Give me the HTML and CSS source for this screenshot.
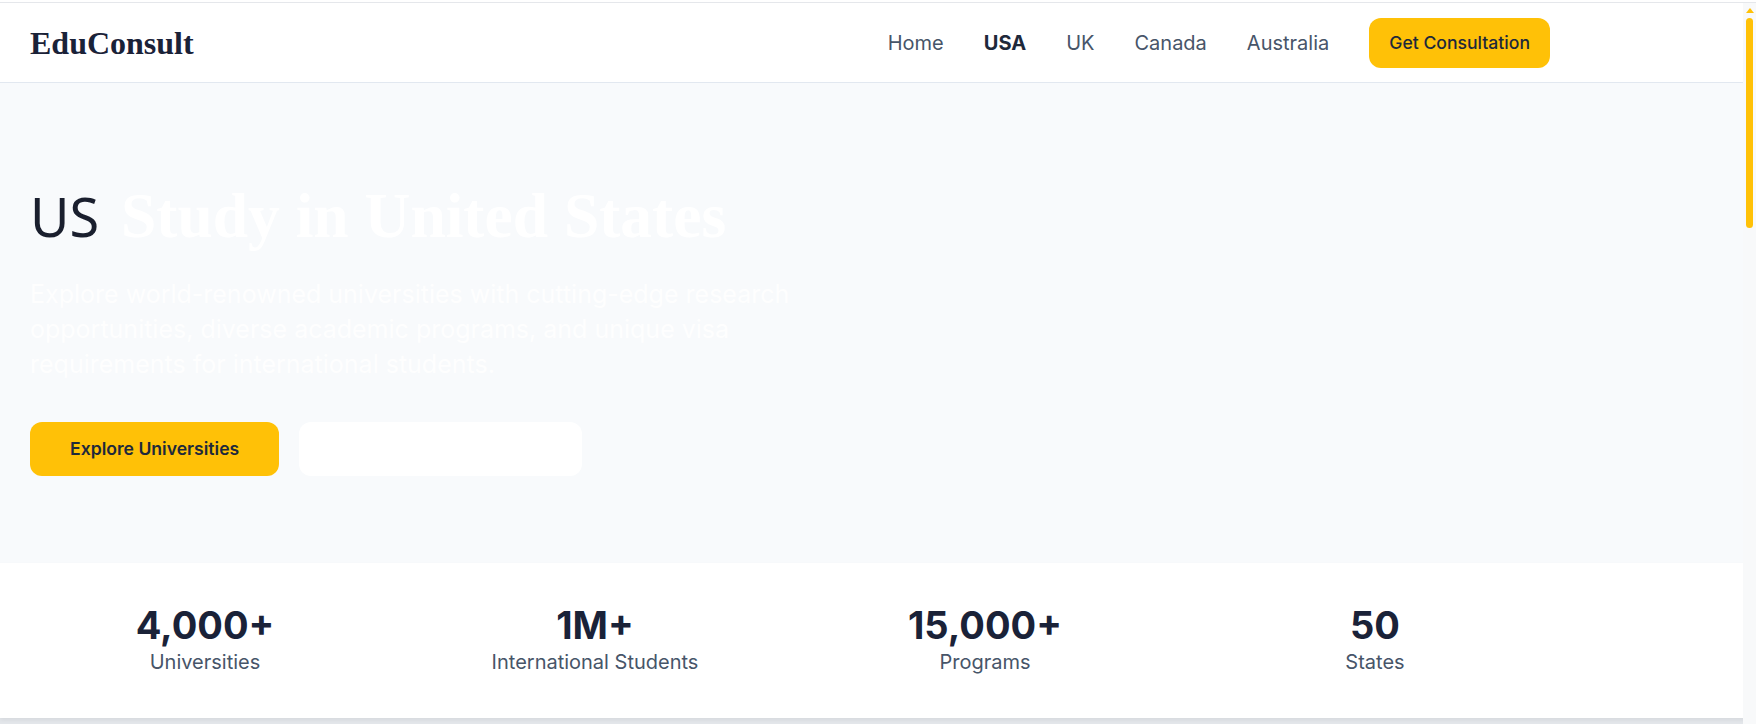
FILE: index.html
```html
<!DOCTYPE html>
<html lang="en">
<head>
<meta charset="utf-8">
<title>Study in USA - EduConsult</title>
<link rel="stylesheet" href="styles.css">
</head>
<body>
<header class="site-header">
  <div class="container header-inner">
    <a class="logo" href="#">EduConsult</a>
    <nav class="nav">
      <a class="nav-link" href="#">Home</a>
      <a class="nav-link active" href="#">USA</a>
      <a class="nav-link" href="#">UK</a>
      <a class="nav-link" href="#">Canada</a>
      <a class="nav-link" href="#">Australia</a>
      <a class="btn btn-primary btn-small" href="#">Get Consultation</a>
    </nav>
  </div>
</header>

<section class="hero">
  <div class="container">
    <h1 class="hero-title"><span class="flag">US</span> Study in United States</h1>
    <p class="hero-text">Explore world-renowned universities with cutting-edge research opportunities, diverse academic programs, and unique visa requirements for international students.</p>
    <div class="hero-actions">
      <a class="btn btn-primary" href="#">Explore Universities</a>
      <a class="btn btn-light" href="#">Visa Requirements</a>
    </div>
  </div>
</section>

<section class="stats">
  <div class="container stats-grid">
    <div class="stat"><div class="stat-number">4,000+</div><div class="stat-label">Universities</div></div>
    <div class="stat"><div class="stat-number">1M+</div><div class="stat-label">International Students</div></div>
    <div class="stat"><div class="stat-number">15,000+</div><div class="stat-label">Programs</div></div>
    <div class="stat"><div class="stat-number">50</div><div class="stat-label">States</div></div>
  </div>
</section>

<section class="more"></section>

<div class="scrollbar" aria-hidden="true">
  <div class="scroll-arrow"></div>
  <div class="scroll-thumb"></div>
</div>
</body>
</html>
```

FILE: styles.css
```css
html {
  scrollbar-width: none;
}

* {
  box-sizing: border-box;
}

body {
  margin: 0;
  padding-top: 2px;
  background: #ffffff;
  font-family: "Inter", "Liberation Sans", sans-serif;
  color: #1e293b;
}

a {
  text-decoration: none;
  color: inherit;
}

.container {
  max-width: 1580px;
  padding: 0 30px;
}

.site-header {
  background: #ffffff;
  border-top: 1px solid #e5e7eb;
  border-bottom: 1px solid #e2e8f0;
}

.header-inner {
  height: 79px;
  display: flex;
  align-items: center;
  justify-content: space-between;
}

.logo {
  font-family: "Liberation Serif", serif;
  font-weight: 700;
  font-size: 32px;
  color: #1a2238;
  padding-top: 2px;
}

.nav {
  display: flex;
  align-items: center;
  gap: 40px;
}

.nav-link {
  font-size: 20px;
  color: #475569;
}

.nav-link.active {
  color: #1e293b;
  font-weight: 700;
}

.btn {
  display: inline-flex;
  align-items: center;
  justify-content: center;
  border-radius: 12px;
  font-weight: 600;
  font-size: 17.6px;
  line-height: 22px;
  padding: 16px 40px;
}

.btn-primary {
  background: #ffc107;
  color: #1e293b;
}

.btn-small {
  font-weight: 500;
  height: 50px;
  padding: 0 20px;
}

.btn-light {
  background: #ffffff;
  color: #ffffff;
  min-width: 283px;
}

.hero {
  background: #f8fafc;
  padding: 96px 0 87px;
}

.hero-title {
  margin: 0 0 24px;
  font-family: "Liberation Serif", serif;
  font-weight: 700;
  font-size: 63.5px;
  line-height: 74px;
  color: #ffffff;
}

.flag {
  font-family: "Noto Sans", sans-serif;
  font-weight: 400;
  font-size: 54px;
  color: #1a1f2e;
  margin-right: 6px;
}

.hero-text {
  margin: 0 0 40px;
  max-width: 800px;
  font-size: 25px;
  line-height: 35px;
  color: rgba(255, 255, 255, 0.9);
}

.hero-actions {
  display: flex;
  gap: 20px;
}

.stats {
  background: #ffffff;
  padding: 40px 0 42px;
  box-shadow: 0 2px 4px rgba(15, 23, 42, 0.06);
  position: relative;
}

.stats-grid {
  display: grid;
  grid-template-columns: repeat(4, 1fr);
  gap: 40px;
}

.stat {
  text-align: center;
}

.stat-number {
  font-size: 38px;
  font-weight: 700;
  line-height: 45.6px;
  color: #1a2238;
}

.stat-label {
  font-size: 20px;
  line-height: 27px;
  color: #475569;
}

.more {
  background: #e3e6ea;
  min-height: 1680px;
}

/* decorative scrollbar drawn over the page edge */
.scrollbar {
  position: fixed;
  top: 3px;
  right: 0;
  bottom: 0;
  width: 13px;
  background: #f8f9fa;
  display: flex;
  flex-direction: column;
  align-items: center;
  padding-top: 5px;
}

.scroll-arrow {
  width: 0;
  height: 0;
  border-left: 4px solid transparent;
  border-right: 4px solid transparent;
  border-bottom: 5px solid #ffc107;
}

.scroll-thumb {
  margin-top: 5px;
  width: 7px;
  height: 210px;
  border-radius: 4px;
  background: #ffc107;
}
```
